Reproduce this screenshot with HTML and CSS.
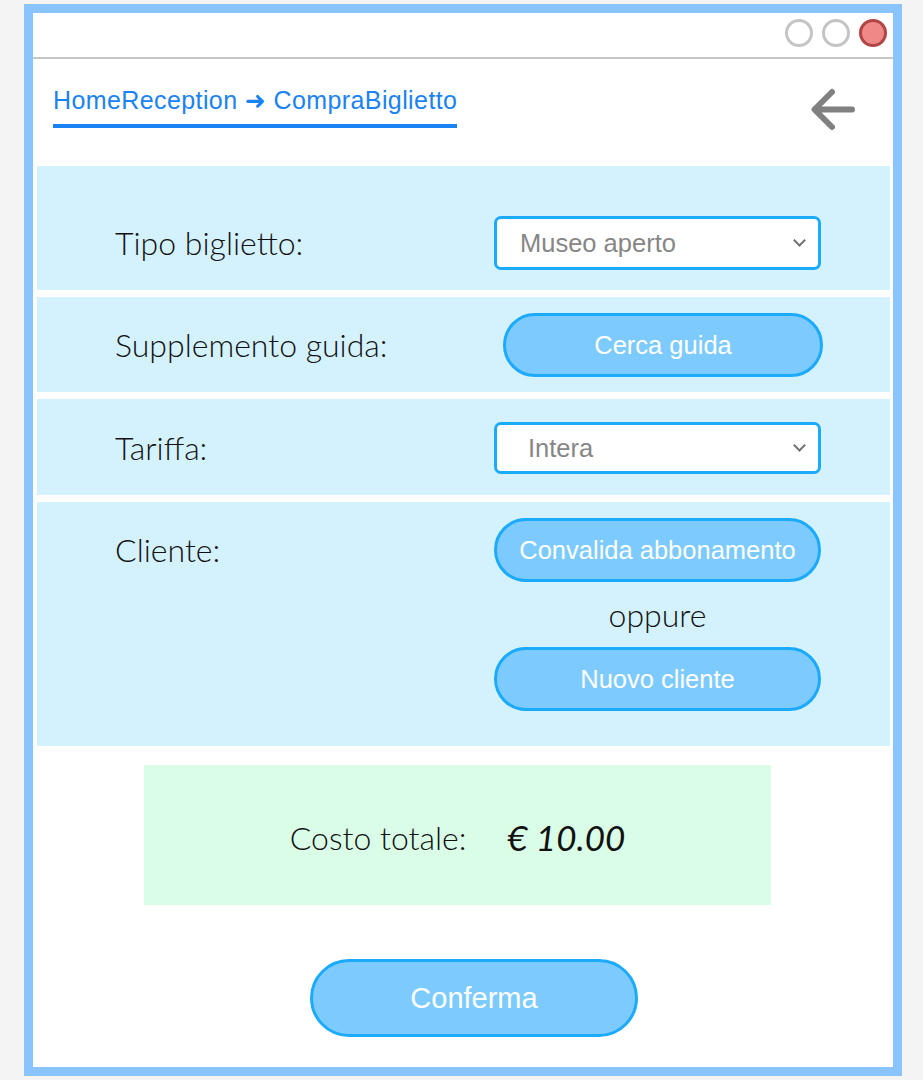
FILE: index.html
```html
<!DOCTYPE html>
<html lang="it">
<head>
<meta charset="utf-8">
<title>CompraBiglietto</title>
<link rel="stylesheet" href="styles.css">
</head>
<body>
<div class="window">
  <div class="titlebar">
    <span class="dot"></span>
    <span class="dot"></span>
    <span class="dot dot-close"></span>
  </div>
  <div class="nav">
    <div class="crumb">HomeReception <span class="arr">➜</span> CompraBiglietto</div>
    <svg class="back" width="46" height="44" viewBox="0 0 46 44">
      <path d="M4 21.5 H41 M21 4 L3.5 21.5 L21 39" fill="none" stroke="#808080" stroke-width="6" stroke-linecap="round" stroke-linejoin="round"/>
    </svg>
  </div>
  <div class="rows">
    <div class="row row-tipo">
      <div class="label">Tipo biglietto:</div>
      <div class="ctrl">
        <div class="select"><span class="sel-text">Museo aperto</span><span class="chev"></span></div>
      </div>
    </div>
    <div class="row row-guida">
      <div class="label">Supplemento guida:</div>
      <div class="ctrl">
        <div class="btn btn-guida">Cerca guida</div>
      </div>
    </div>
    <div class="row row-tariffa">
      <div class="label">Tariffa:</div>
      <div class="ctrl">
        <div class="select"><span class="sel-text sel-indent">Intera</span><span class="chev"></span></div>
      </div>
    </div>
    <div class="row row-cliente">
      <div class="label">Cliente:</div>
      <div class="ctrl ctrl-stack">
        <div class="btn">Convalida abbonamento</div>
        <div class="oppure">oppure</div>
        <div class="btn">Nuovo cliente</div>
      </div>
    </div>
  </div>
  <div class="total">
    <span class="total-label">Costo totale:</span>
    <span class="total-value">€ 10.00</span>
  </div>
  <div class="confirm-wrap">
    <div class="btn btn-confirm">Conferma</div>
  </div>
</div>
</body>
</html>
```
FILE: styles.css
```css
* { box-sizing: border-box; }
html, body { margin: 0; padding: 0; }
body {
  background: #f4f4f4;
  width: 923px;
  height: 1080px;
  overflow: hidden;
  font-family: "Liberation Sans", Arial, sans-serif;
}
.window {
  margin: 4px 0 0 24px;
  width: 878px;
  height: 1072px;
  border: 9px solid #8ac4ff;
  background: #ffffff;
}
.titlebar {
  height: 46px;
  border-bottom: 2px solid #c6c6c6;
  display: flex;
  justify-content: flex-end;
  align-items: flex-start;
  gap: 9px;
  padding: 6px 6px 0 0;
}
.dot {
  width: 28px;
  height: 28px;
  border-radius: 50%;
  border: 3px solid #c4c4c4;
  background: #ffffff;
}
.dot-close {
  background: #f08888;
  border-color: #b04646;
}
.nav {
  height: 107px;
  display: flex;
  justify-content: space-between;
  align-items: flex-start;
  padding: 26px 36px 0 20px;
}
.crumb {
  color: #1a82f2;
  font-size: 25px;
  letter-spacing: 0.4px;
  line-height: 30px;
  padding-bottom: 8px;
  border-bottom: 4px solid #1a82f2;
}
.arr { font-family: "DejaVu Sans", sans-serif; font-size: 25px; }
.back { margin-top: 3px; }
.rows {
  margin: 0 3px 0 4px;
  display: flex;
  flex-direction: column;
  gap: 7px;
}
.row {
  background: #d4f1fe;
  display: flex;
  align-items: flex-start;
}
.row-tipo { height: 124px; padding-top: 50px; }
.row-guida { height: 95px; padding-top: 16px; }
.row-tariffa { height: 96px; padding-top: 23px; }
.row-cliente { height: 244px; padding-top: 16px; }
.label {
  flex: 1;
  padding-left: 78px;
  font-family: "Lato Light", "Lato", sans-serif;
  font-weight: 300;
  font-size: 32px;
  color: #111;
  line-height: 54px;
}
.row-guida .label, .row-cliente .label { line-height: 64px; }
.row-tariffa .label { line-height: 52px; }
.ctrl {
  width: 327px;
  margin-right: 69px;
}
.ctrl-stack {
  display: flex;
  flex-direction: column;
  align-items: stretch;
}
.select {
  height: 54px;
  background: #ffffff;
  border: 3px solid #1caafc;
  border-radius: 7px;
  display: flex;
  align-items: center;
  justify-content: space-between;
  padding: 0 14px 0 23px;
  color: #868686;
  font-size: 25.5px;
}
.row-tariffa .select { height: 52px; }
.sel-indent { padding-left: 8px; }
.chev {
  width: 9px;
  height: 9px;
  border-right: 2px solid #707070;
  border-bottom: 2px solid #707070;
  transform: rotate(45deg);
  margin-top: -5px;
}
.btn {
  height: 64px;
  background: #7dcbfe;
  border: 3px solid #1caafc;
  border-radius: 32px;
  color: #ffffff;
  font-size: 25.5px;
  display: flex;
  align-items: center;
  justify-content: center;
}
.btn-guida {
  width: 320px;
  margin-left: 9px;
}
.oppure {
  font-family: "Lato Light", "Lato", sans-serif;
  font-weight: 300;
  font-size: 32px;
  color: #111;
  text-align: center;
  height: 65px;
  line-height: 65px;
}
.total {
  margin: 19px 0 0 111px;
  width: 627px;
  height: 140px;
  background: #d9fde6;
  display: flex;
  justify-content: center;
  align-items: center;
  gap: 41px;
  padding-top: 4px;
}
.total-label {
  font-family: "Lato Light", "Lato", sans-serif;
  font-weight: 300;
  font-size: 32px;
  color: #111;
}
.total-value {
  font-family: "Lato", sans-serif;
  font-style: italic;
  font-size: 35px;
  color: #111;
}
.confirm-wrap {
  display: flex;
  padding: 54px 0 0 277px;
}
.btn-confirm {
  width: 328px;
  height: 78px;
  border-radius: 39px;
  font-size: 29px;
}
```
